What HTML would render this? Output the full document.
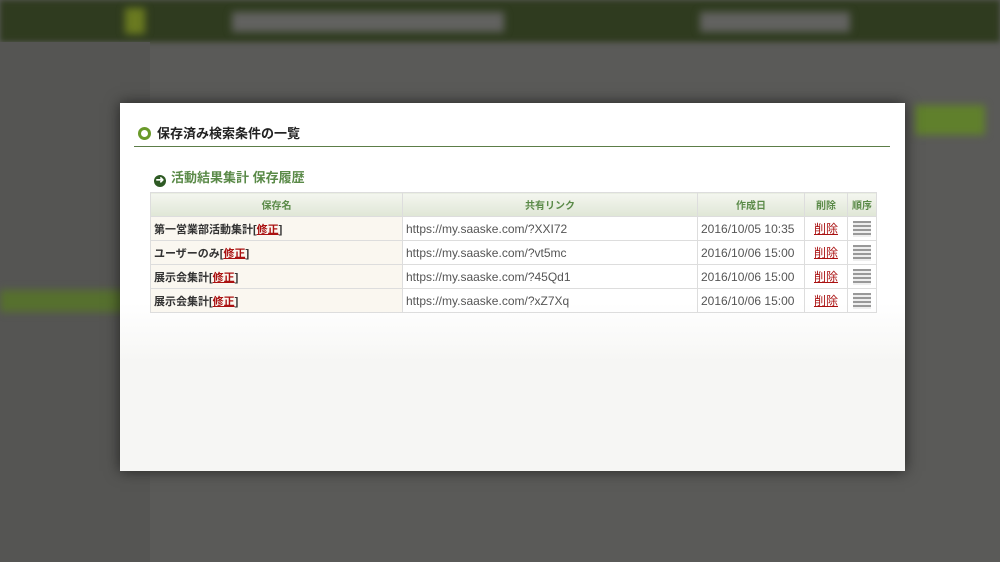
<!DOCTYPE html>
<html><head><meta charset="utf-8"><style>
body{margin:0;width:1000px;height:562px;overflow:hidden;background:#5a5a58;font-family:"Liberation Sans","Noto Sans CJK JP",sans-serif;position:relative}
.top{position:absolute;left:0;top:0;width:1000px;height:42px;background:#2f3b1f;filter:blur(3px)}
.side{position:absolute;left:0;top:42px;width:150px;height:520px;background:#555553}
.blob{position:absolute;filter:blur(4px)}
.modal{position:absolute;left:120px;top:103px;width:785px;height:368px;background:linear-gradient(#fff 0,#fff 200px,#f6f6f4 260px,#f6f6f4);box-shadow:0 0 14px rgba(0,0,0,.6)}
.h1{position:absolute;left:18px;top:20px;font-size:13px;font-weight:bold;color:#222}
.h1 i{display:inline-block;width:7px;height:7px;border:3px solid #6a9a2a;border-radius:50%;background:#fff;vertical-align:-2px;margin-right:6px}
.line{position:absolute;left:14px;top:43px;width:756px;border-top:1px solid #5c7d48}
.h2{position:absolute;left:34px;top:64px;font-size:13px;font-weight:bold;color:#5a8a48}
.h2 i{display:inline-block;width:12px;height:12px;border-radius:50%;background:#2e5a24;color:#fff;font-style:normal;font-size:10px;line-height:12px;text-align:center;vertical-align:-1px;margin-right:5px}
table{position:absolute;left:30px;top:89px;width:726px;border-collapse:collapse;font-size:12px;table-layout:fixed}
td,th{border:1px solid #ddd;height:23px;padding:0 3px;white-space:nowrap;overflow:hidden}
th{background:linear-gradient(#f4f6ef,#dfe6d6);color:#5a8a48;font-size:10px;font-weight:bold;text-align:center}
td.n{background:#faf7f0;font-weight:bold;color:#333;font-size:11px}
td{color:#555}
a{color:#a11;text-decoration:underline}
.bar{display:block;width:18px;height:16px;margin:0 auto;background:repeating-linear-gradient(#999 0,#999 2px,#eee 2px,#eee 4px)}
</style></head><body>
<div class="top"></div>
<div class="blob" style="left:232px;top:12px;width:272px;height:20px;background:#626260"></div>
<div class="blob" style="left:700px;top:12px;width:150px;height:20px;background:#626260"></div>
<div class="blob" style="left:125px;top:8px;width:20px;height:26px;background:#6a7a20"></div>
<div class="side"></div>
<div class="blob" style="left:0;top:290px;width:150px;height:22px;background:#56702e"></div>
<div class="blob" style="left:915px;top:105px;width:70px;height:30px;background:#60802c"></div>
<div class="modal">
<div class="h1"><i></i>保存済み検索条件の一覧</div>
<div class="line"></div>
<div class="h2"><i>➜</i>活動結果集計 保存履歴</div>
<table>
<colgroup><col style="width:252px"><col style="width:295px"><col style="width:107px"><col style="width:43px"><col style="width:29px"></colgroup>
<tr><th>保存名</th><th>共有リンク</th><th>作成日</th><th>削除</th><th>順序</th></tr>
<tr><td class="n">第一営業部活動集計[<a>修正</a>]</td><td>https://my.saaske.com/?XXI72</td><td>2016/10/05 10:35</td><td style="text-align:center"><a>削除</a></td><td><span class="bar"></span></td></tr>
<tr><td class="n">ユーザーのみ[<a>修正</a>]</td><td>https://my.saaske.com/?vt5mc</td><td>2016/10/06 15:00</td><td style="text-align:center"><a>削除</a></td><td><span class="bar"></span></td></tr>
<tr><td class="n">展示会集計[<a>修正</a>]</td><td>https://my.saaske.com/?45Qd1</td><td>2016/10/06 15:00</td><td style="text-align:center"><a>削除</a></td><td><span class="bar"></span></td></tr>
<tr><td class="n">展示会集計[<a>修正</a>]</td><td>https://my.saaske.com/?xZ7Xq</td><td>2016/10/06 15:00</td><td style="text-align:center"><a>削除</a></td><td><span class="bar"></span></td></tr>
</table>
</div>
</body></html>
